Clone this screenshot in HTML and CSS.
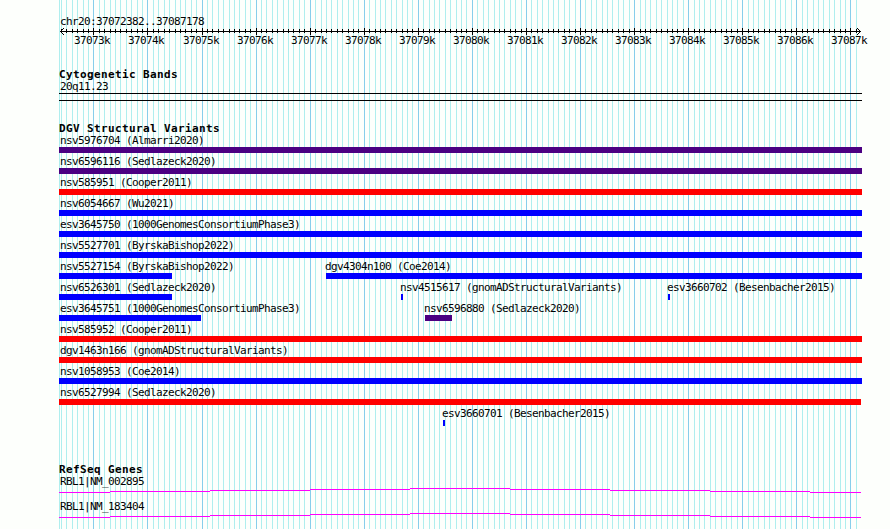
FILE: index.html
```
<!DOCTYPE html>
<html>
<head>
    <meta charset="utf-8" />
    <title>chr20:37072382..37087178</title>
    <link rel="stylesheet" href="styles.css">
</head>
<body>
<div class="browser">
    <svg class="grid" width="803" height="529" shape-rendering="crispEdges">
        <path id="minor" class="minor" />
        <path id="major" class="major" />
    </svg>

    <div class="ruler">
        <div class="label">chr20:37072382..37087178</div>
        <svg class="scale" width="803" height="9" shape-rendering="crispEdges">
            <path id="ticks" />
            <path d="M1 4h801v1H1z M2 3h1v3h-1z M3 2h1v1h-1z M3 6h1v1h-1z M4 1h1v1h-1z M4 7h1v1h-1z M800 3h1v3h-1z M799 2h1v1h-1z M799 6h1v1h-1z M798 1h1v1h-1z M798 7h1v1h-1z" />
        </svg>
        <div class="numbers" id="numbers"></div>
    </div>

    <div class="track cyto">
        <h2>Cytogenetic Bands</h2>
        <div class="label">20q11.23</div>
        <div class="band"></div>
    </div>

    <div class="track variants">
        <h2>DGV Structural Variants</h2>
        <div class="row"><div class="feature purple" style="width:803px"><span class="label">nsv5976704 (Almarri2020)</span></div></div>
        <div class="row"><div class="feature purple" style="width:803px"><span class="label">nsv6596116 (Sedlazeck2020)</span></div></div>
        <div class="row"><div class="feature red" style="width:803px"><span class="label">nsv585951 (Cooper2011)</span></div></div>
        <div class="row"><div class="feature blue" style="width:803px"><span class="label">nsv6054667 (Wu2021)</span></div></div>
        <div class="row"><div class="feature blue" style="width:803px"><span class="label">esv3645750 (1000GenomesConsortiumPhase3)</span></div></div>
        <div class="row"><div class="feature blue" style="width:803px"><span class="label">nsv5527701 (ByrskaBishop2022)</span></div></div>
        <div class="row">
            <div class="feature blue" style="width:113px"><span class="label">nsv5527154 (ByrskaBishop2022)</span></div>
            <div class="feature blue inner" style="margin-left:154px; width:536px"><span class="label">dgv4304n100 (Coe2014)</span></div>
        </div>
        <div class="row">
            <div class="feature blue" style="width:113px"><span class="label">nsv6526301 (Sedlazeck2020)</span></div>
            <div class="feature blue inner" style="margin-left:229px; width:2px"><span class="label">nsv4515617 (gnomADStructuralVariants)</span></div>
            <div class="feature blue inner" style="margin-left:265px; width:2px"><span class="label">esv3660702 (Besenbacher2015)</span></div>
        </div>
        <div class="row">
            <div class="feature blue" style="width:142px"><span class="label">esv3645751 (1000GenomesConsortiumPhase3)</span></div>
            <div class="feature purple inner" style="margin-left:224px; width:27px"><span class="label">nsv6596880 (Sedlazeck2020)</span></div>
        </div>
        <div class="row"><div class="feature red" style="width:803px"><span class="label">nsv585952 (Cooper2011)</span></div></div>
        <div class="row"><div class="feature red" style="width:803px"><span class="label">dgv1463n166 (gnomADStructuralVariants)</span></div></div>
        <div class="row"><div class="feature blue" style="width:803px"><span class="label">nsv1058953 (Coe2014)</span></div></div>
        <div class="row"><div class="feature red" style="width:802px"><span class="label">nsv6527994 (Sedlazeck2020)</span></div></div>
        <div class="row"><div class="feature blue inner" style="margin-left:384px; width:2px"><span class="label">esv3660701 (Besenbacher2015)</span></div></div>
    </div>

    <div class="track genes">
        <h2>RefSeq Genes</h2>
        <div class="gene">
            <div class="label">RBL1|NM_002895</div>
            <svg class="intron" width="803" height="5" shape-rendering="crispEdges">
                <path d="M0 4h51v1H0z M51 3h100v1h-100z M151 2h100v1h-100z M251 1h100v1h-100z M351 0h100v1h-100z M451 1h100v1h-100z M551 2h100v1h-100z M651 3h100v1h-100z M751 4h51v1h-51z" />
            </svg>
        </div>
        <div class="gene">
            <div class="label">RBL1|NM_183404</div>
            <svg class="intron" width="803" height="5" shape-rendering="crispEdges">
                <path d="M0 4h51v1H0z M51 3h100v1h-100z M151 2h100v1h-100z M251 1h100v1h-100z M351 0h100v1h-100z M451 1h100v1h-100z M551 2h100v1h-100z M651 3h100v1h-100z M751 4h51v1h-51z" />
            </svg>
        </div>
    </div>
</div>

<script type="text/javascript" src="ruler.js"></script>
</body>
</html>
```
FILE: styles.css
```
body {
    margin: 0;
    background-color: #fdfffc;
    color: #000;
    font: 11px/13px 'DejaVu Sans Mono', 'Liberation Mono', monospace;
    letter-spacing: -.622px;
    overflow: hidden;
}
h2 {
    margin: 0;
    height: 12px;
    font-size: 11px;
    font-weight: bold;
    letter-spacing: .378px;
    white-space: nowrap;
}
svg {
    display: block;
}
.browser {
    position: relative;
    width: 803px;
    height: 529px;
    margin-left: 59px;
}
/* grid lines run behind every track */
.grid {
    position: absolute;
    top: 0;
    left: 0;
    z-index: -1;
}
.minor {
    fill: #afeeee;
}
.major {
    fill: #87ceeb;
}
.label {
    display: block;
    height: 13px;
    padding-left: 1px;
    white-space: nowrap;
}
.ruler {
    height: 68px;
    padding-top: 15px;
    box-sizing: border-box;
}
.scale {
    margin-top: -1px;
}
.numbers {
    display: flex;
    margin-top: -2px;
}
    .numbers span {
        flex: none;
        width: 36px;
        white-space: nowrap;
    }
.cyto {
    height: 54px;
}
    .cyto .band {
        height: 6px;
        border: solid #000;
        border-width: 1px 0;
    }
.variants {
    height: 341px;
}
.row {
    display: flex;
    height: 21px;
}
.feature {
    flex: none;
    height: 6px;
    padding-top: 13px;
    background-clip: content-box;
}
    .feature .label {
        margin-top: -13px;
    }
    .inner .label {
        padding-left: 0;
        margin-left: -1px;
    }
.purple {
    background-color: #4b0082;
}
.red {
    background-color: #f00;
}
.blue {
    background-color: #00f;
}
.gene {
    height: 25px;
}
.intron {
    fill: #f0f;
}
```
FILE: ruler.js
```
var START = 37072382;
var END = 37087178;
var WIDTH = 800;

// base position -> pixel column
function toX(pos) {
    return 1 + Math.round((pos - START) * WIDTH / (END - START));
}

var minor = "M0 0h1v529H0z";
var major = "";
var ticks = "";
var numbers = [];
var edge = 0;

for (var pos = 37072400; pos <= END; pos += 100) {
    var x = toX(pos);
    if (pos % 1000 === 0) {
        major += "M" + x + " 0h1v529h-1z";
        ticks += "M" + x + " 1h1v7h-1z";
        numbers.push("<span style='margin-left:" + (x - 19 - edge) + "px'>" + pos / 1000 + "k</span>");
        edge = x + 17;
    } else {
        minor += "M" + x + " 0h1v529h-1z";
        ticks += "M" + x + " 2h1v4h-1z";
    }
}

document.getElementById("minor").setAttribute("d", minor);
document.getElementById("major").setAttribute("d", major);
document.getElementById("ticks").setAttribute("d", ticks);
document.getElementById("numbers").innerHTML = numbers.join("");
```
